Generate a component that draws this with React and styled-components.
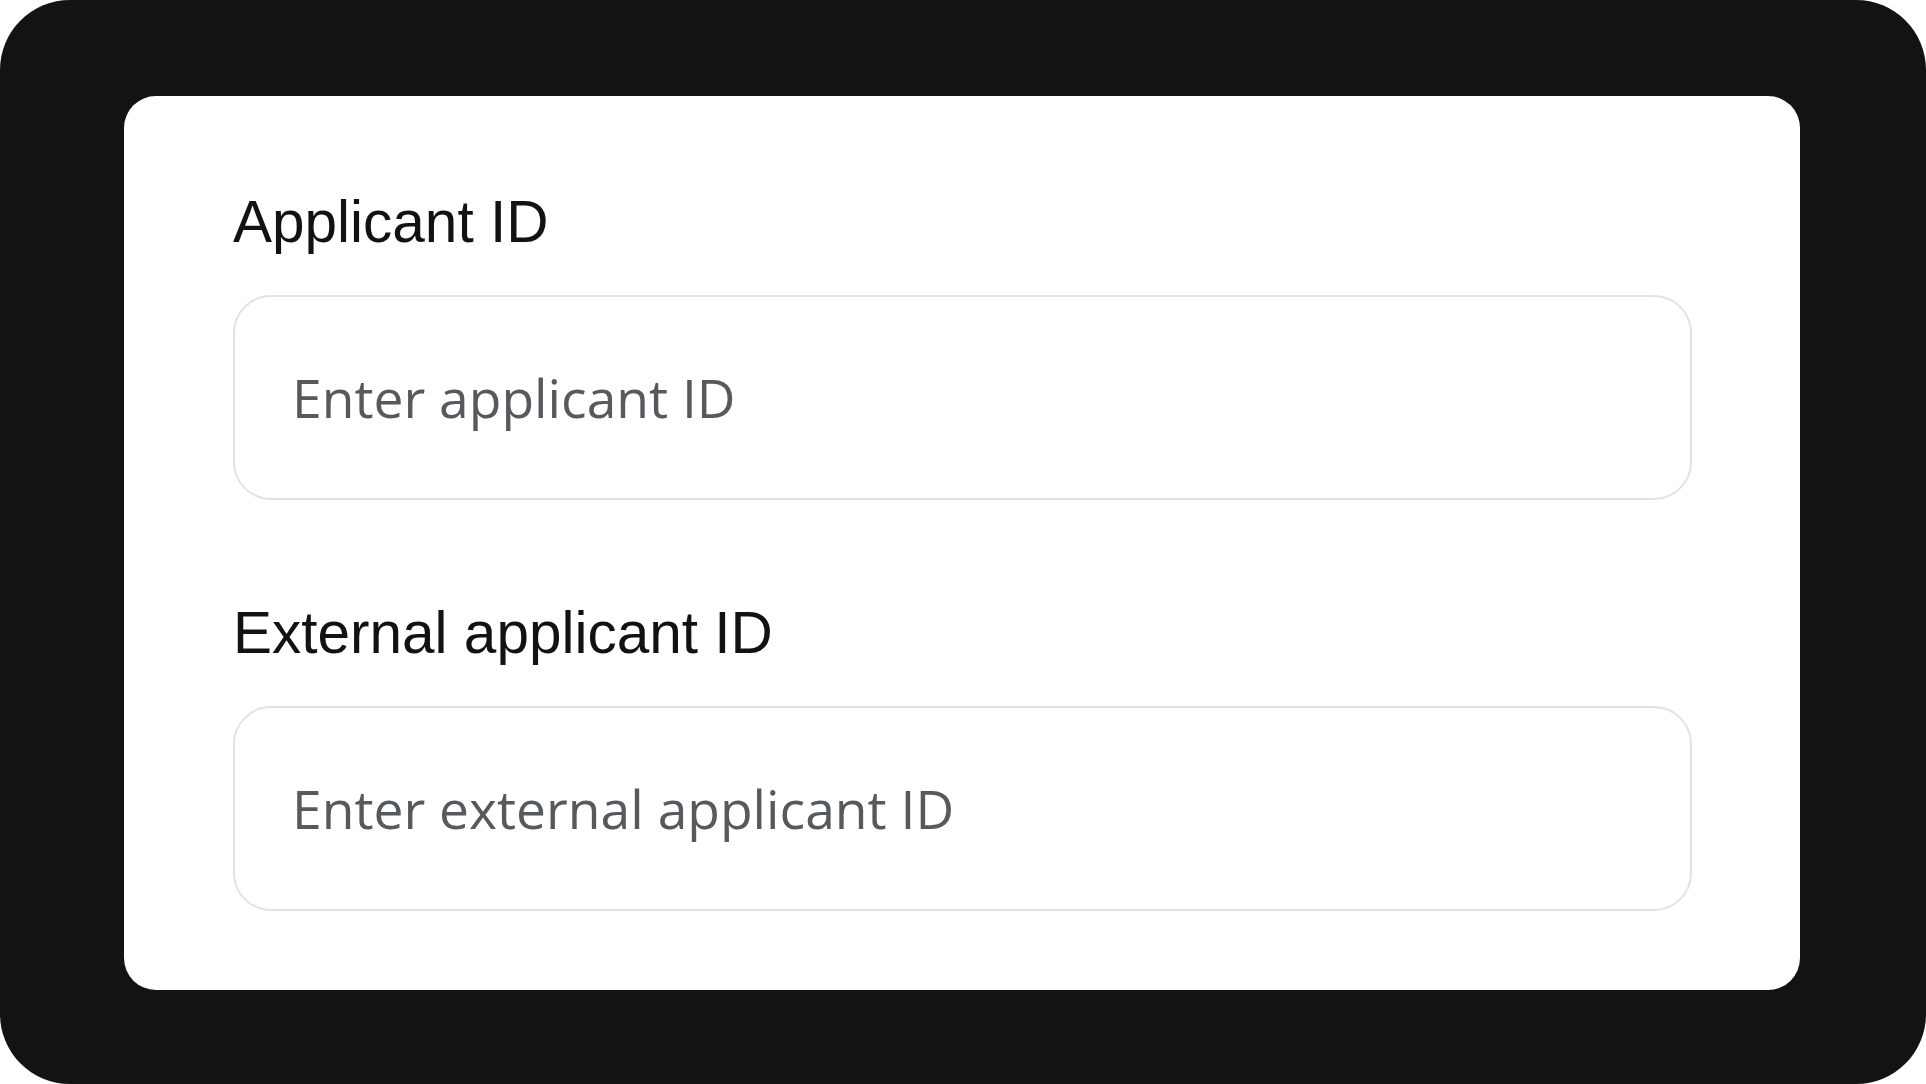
import styled, { createGlobalStyle } from 'styled-components';

const GlobalStyle = createGlobalStyle`
    * {
        box-sizing: border-box;
    }

    html, body {
        margin: 0;
        padding: 0;
        background: #ffffff;
    }
`;

export const Frame = styled.div`
    width: 100vw;
    height: 100vh;
    display: flex;
    align-items: flex-start;
    justify-content: center;
    padding: 96px 126px 0 124px;
    background: #131313;
    border-radius: 70px;
    overflow: hidden;
`;

export const Card = styled.form`
    width: 100%;
    display: flex;
    flex-direction: column;
    gap: 98px;
    padding: 91px 108px 79px 109px;
    background: #ffffff;
    border-radius: 32px;
`;

export const Field = styled.div`
    display: flex;
    flex-direction: column;
    gap: 38px;
`;

export const Label = styled.label`
    font-family: "Liberation Sans", Arial, sans-serif;
    font-size: 58.5px;
    line-height: 70px;
    color: #121212;
`;

export const Input = styled.input`
    width: 100%;
    height: 205px;
    padding: 0 40px 0 57px;
    border: 2px solid #e2e2e2;
    border-radius: 38px;
    background: #ffffff;
    font-family: "Open Sans", "Noto Sans", sans-serif;
    font-size: 53.4px;
    color: #222;
    outline: none;

    &::placeholder {
        color: #565a5f;
        opacity: 1;
    }
`;

const fields = [
    { id: 'applicant-id', label: 'Applicant ID', placeholder: 'Enter applicant ID' },
    { id: 'external-applicant-id', label: 'External applicant ID', placeholder: 'Enter external applicant ID' },
];

const App = () => {
    return (
        <>
            <GlobalStyle />
            <Frame>
                <Card onSubmit={(e) => e.preventDefault()}>
                    {fields.map((f) => (
                        <Field key={f.id}>
                            <Label htmlFor={f.id}>{f.label}</Label>
                            <Input id={f.id} type="text" placeholder={f.placeholder} />
                        </Field>
                    ))}
                </Card>
            </Frame>
        </>
    );
};

export default App;
